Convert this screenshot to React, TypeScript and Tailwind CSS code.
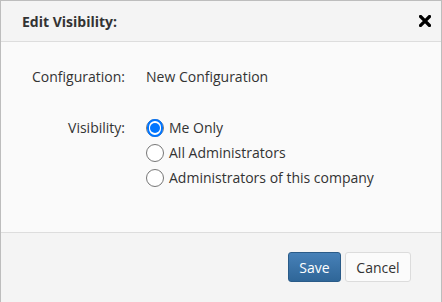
import React from "react";

function Radio({ checked }: { checked?: boolean }) {
  return (
    <span className="w-[18px] h-[18px] rounded-full border border-[#767676] bg-white flex items-center justify-center shrink-0">
      {checked ? <span className="w-[18px] h-[18px] rounded-full border-2 border-[#0075ff] flex items-center justify-center"><span className="w-[10px] h-[10px] rounded-full bg-[#0075ff]" /></span> : null}
    </span>
  );
}

export default function App() {
  const opts = ["Me Only", "All Administrators", "Administrators of this company"];
  return (
    <div className="w-[442px] h-[302px] border-t border-l border-r border-[#bdbdbd] flex flex-col text-[#333] text-[14px]" style={{ fontFamily: '"Open Sans", sans-serif' }}>
      <div className="h-[41px] shrink-0 bg-[#f4f4f4] border-b border-[#dddddd] flex items-center justify-between pl-[21px] pr-[10px]">
        <span className="font-bold text-[14px] text-[#333]">Edit Visibility:</span>
        <svg width="12" height="12" viewBox="0 0 12 12">
          <path d="M1.5 1.5 L10.5 10.5 M10.5 1.5 L1.5 10.5" stroke="#000" strokeWidth="3.2" strokeLinecap="square" />
        </svg>
      </div>
      <div className="h-[191px] shrink-0 bg-[#fafafa] border-b border-[#dddddd] pt-[24px]">
        <div className="flex items-center h-[20px]">
          <div className="w-[124px] text-right">Configuration:</div>
          <div className="pl-[21px]">New Configuration</div>
        </div>
        <div className="flex mt-[29px]">
          <div className="w-[124px] text-right h-[25px] leading-[25px]">Visibility:</div>
          <div className="pl-[21px] flex flex-col">
            {opts.map((o, i) => (
              <div key={o} className="flex items-center h-[25px] gap-[5px]">
                <Radio checked={i === 0} />
                <span>{o}</span>
              </div>
            ))}
          </div>
        </div>
      </div>
      <div className="flex-1 bg-[#f4f4f4] flex justify-end items-start pt-[19px] pr-[30px] gap-[4px]">
        <button className="w-[53px] h-[30px] rounded-[3px] border border-[#2a5b88] bg-gradient-to-b from-[#4781b8] to-[#2f6698] text-white text-[14px]">Save</button>
        <button className="w-[66px] h-[30px] rounded-[3px] border border-[#dcdcdc] bg-[#fbfbfb] text-[#333] text-[14px]">Cancel</button>
      </div>
    </div>
  );
}
